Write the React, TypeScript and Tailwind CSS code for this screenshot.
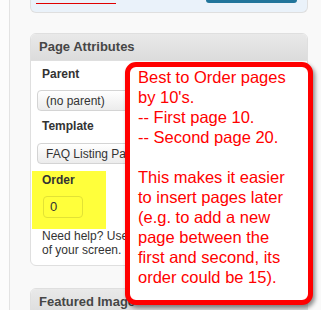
const font = { fontFamily: '"Liberation Sans", Arial, sans-serif' };

function Select({ label }: { label: string }) {
  return (
    <div className="ml-[-5px] flex h-[21px] w-[220px] items-center rounded-[4px] border border-[#d4d4d4] bg-gradient-to-b from-white to-[#ececec] pl-[8px] text-[12px] text-[#333]">
      {label}
    </div>
  );
}

function BoxHeader({ title }: { title: string }) {
  return (
    <div className="flex h-[27px] items-center border-b border-[#dfdfdf] bg-gradient-to-b from-[#e9e9e9] to-[#dcdcdc] pl-[8px] text-[13px] font-bold text-[#464646]">
      {title}
    </div>
  );
}

export default function App() {
  return (
    <div className="relative flex h-[310px] w-[321px] overflow-hidden bg-[#f9f9f9]" style={font}>
      <div className="h-full w-[10px] shrink-0 border-r border-[#e3e3e3] bg-[#fcfcfc]" />

      <div className="flex flex-col pl-[20px]">
        {/* bottom of the Publish box above */}
        <div className="flex h-[13px] w-[278px] shrink-0 items-start justify-between rounded-b-[6px] border-x border-b border-[#dfdfdf] bg-[#eaf2fa] pl-[5px] pr-[10px]">
          <div className="mt-[3px] h-[1px] w-[80px] bg-[#e00000]" />
          <div className="h-[3px] w-[91px] rounded-b-[3px] bg-[#21759b]" />
        </div>

        {/* Page Attributes */}
        <div className="mt-[20px] w-[278px] shrink-0 overflow-hidden rounded-[6px] border border-[#dfdfdf] bg-white">
          <BoxHeader title="Page Attributes" />
          <div className="flex flex-col items-start pl-[11px] pt-[5px] pb-[8px] text-[12px] leading-[16px] text-[#333]">
            <div className="font-bold">Parent</div>
            <div className="mt-[8px]">
              <Select label="(no parent)" />
            </div>
            <div className="mt-[7px] font-bold">Template</div>
            <div className="mt-[9px]">
              <Select label="FAQ Listing Page" />
            </div>
            <div className="mt-[7px] ml-[-10px] w-[74px] bg-[#ffff3b] pl-[10px] pt-[1px] pb-[11px]">
              <div className="font-bold">Order</div>
              <div className="mt-[8px] ml-[1px] flex h-[22px] w-[40px] items-center rounded-[4px] border border-[#e2e235] pl-[6px] text-[13px]">
                0
              </div>
            </div>
            <div className="whitespace-nowrap leading-[14px]">Need help? Use the Help tab in the upper right</div>
            <div className="whitespace-nowrap leading-[14px]">of your screen.</div>
          </div>
        </div>

        {/* Featured Image */}
        <div className="mt-[22px] w-[278px] shrink-0 overflow-hidden rounded-[6px] border border-[#dfdfdf] bg-white">
          <BoxHeader title="Featured Image" />
          <div className="h-[40px]" />
        </div>
      </div>

      {/* annotation callout */}
      <div className="absolute left-[125px] top-[62px] h-[243px] w-[188px] rounded-[11px] border-[5px] border-[#ff0000] bg-white pl-[8px] text-[16.5px] leading-[20px] text-[#ff0000] shadow-[2px_3px_4px_rgba(0,0,0,0.45)]">
        Best to Order pages
        <br />
        by 10's.
        <br />
        -- First page 10.
        <br />
        -- Second page 20.
        <br />
        <br />
        This makes it easier
        <br />
        to insert pages later
        <br />
        (e.g. to add a new
        <br />
        page between the
        <br />
        first and second, its
        <br />
        order could be 15).
      </div>
    </div>
  );
}
